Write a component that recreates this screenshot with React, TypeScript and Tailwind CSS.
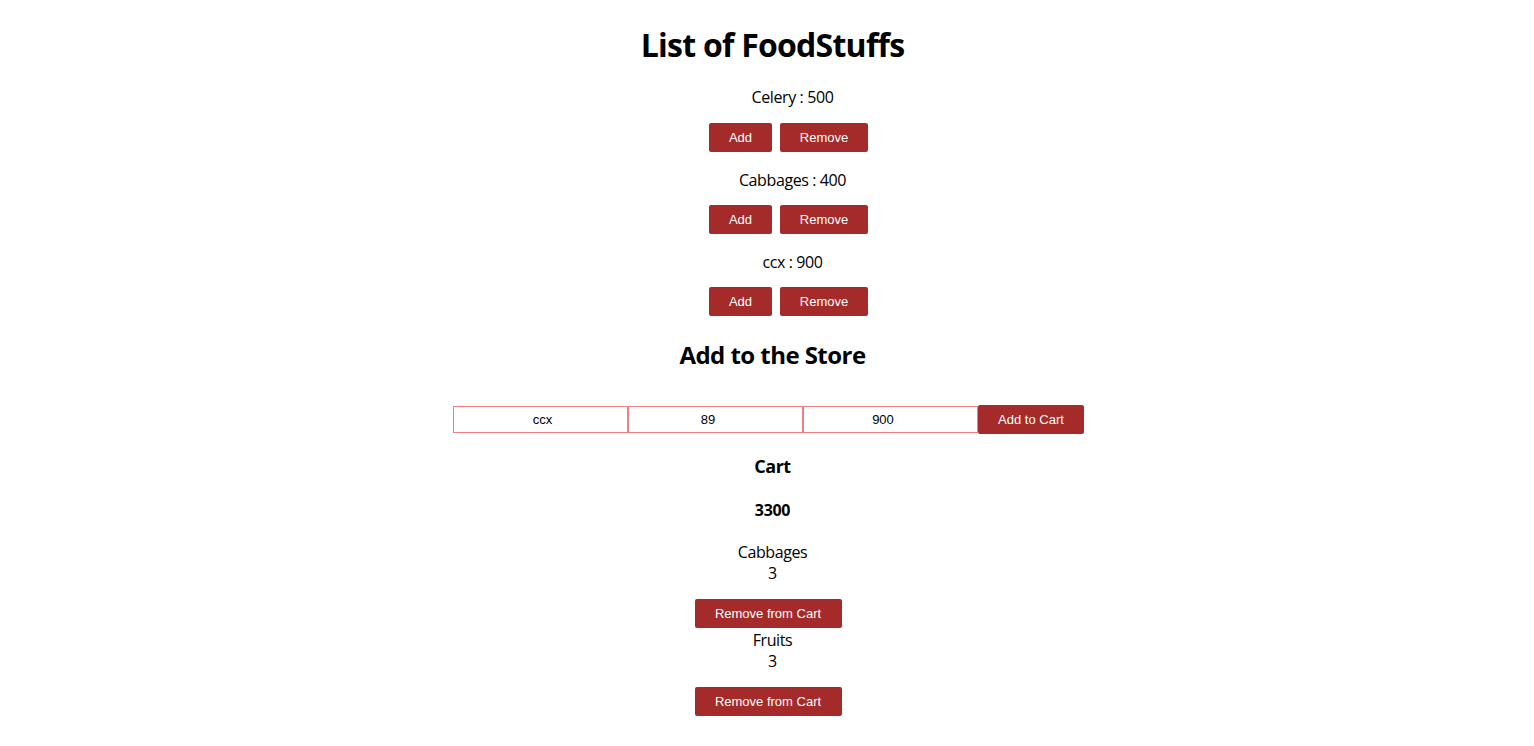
import React from "react";

const items = [
  { name: "Celery", price: 500 },
  { name: "Cabbages", price: 400 },
  { name: "ccx", price: 900 },
];

const cart = [
  { name: "Cabbages", qty: 3 },
  { name: "Fruits", qty: 3 },
];

const btn =
  "bg-[#a52a2a] text-white rounded-[2px] h-[29px] text-[13px] font-['Liberation_Sans',Arial,sans-serif] cursor-pointer";

const inputCls =
  "w-[175px] h-[27px] border border-[#f08080] text-center text-[13px] font-['Liberation_Sans',Arial,sans-serif] outline-none";

export default function App() {
  return (
    <div className="min-h-screen bg-white text-black font-['Open_Sans',sans-serif] flex flex-col items-center">
      <h1 className="mt-[23px] pl-[11px] text-[32px] font-bold leading-[43px] tracking-[-0.75px]">List of FoodStuffs</h1>
      <ul className="self-stretch pl-[40px] flex flex-col items-center">
        {items.map((it, i) => (
          <li key={i} className="flex flex-col items-center">
            <p className={`${i === 0 ? "mt-[19px]" : "mt-[16px]"} pl-[11px] text-[16px] leading-[24px] tracking-[-0.4px]`}>
              {it.name} : {it.price}
            </p>
            <div className={`${i === 0 ? "mt-[14px]" : "mt-[13px]"} pl-[3px] flex gap-[8px]`}>
              <button className={`${btn} w-[63px]`}>Add</button>
              <button className={`${btn} w-[88px]`}>Remove</button>
            </div>
          </li>
        ))}
      </ul>
      <h2 className="mt-[23px] pl-[11px] text-[24px] font-bold leading-[32px] tracking-[-0.55px]">Add to the Store</h2>
      <div className="mt-[34px] pl-[3px] flex items-center">
        <input type="text" defaultValue="ccx" className={`${inputCls} pl-[4px]`} />
        <input type="number" defaultValue={89} className={inputCls} />
        <input type="number" defaultValue={900} className={inputCls} />
        <button className={`${btn} w-[106px]`}>Add to Cart</button>
      </div>
      <h3 className="mt-[20px] pl-[11px] text-[18px] font-bold leading-[24px] tracking-[-0.5px]">Cart</h3>
      <p className="mt-[20px] pl-[11px] text-[16px] font-bold leading-[24px] tracking-[-0.3px]">3300</p>
      {cart.map((c, i) => (
        <div key={i} className="flex flex-col items-center">
          <p className={`${i === 0 ? "mt-[20px]" : "mt-[2px]"} pl-[11px] text-[16px] leading-[21px] tracking-[-0.4px]`}>{c.name}</p>
          <p className="pl-[11px] text-[16px] leading-[21px]">{c.qty}</p>
          <button className={`${btn} mt-[15px] ml-[2px] w-[147px]`}>Remove from Cart</button>
        </div>
      ))}
    </div>
  );
}
